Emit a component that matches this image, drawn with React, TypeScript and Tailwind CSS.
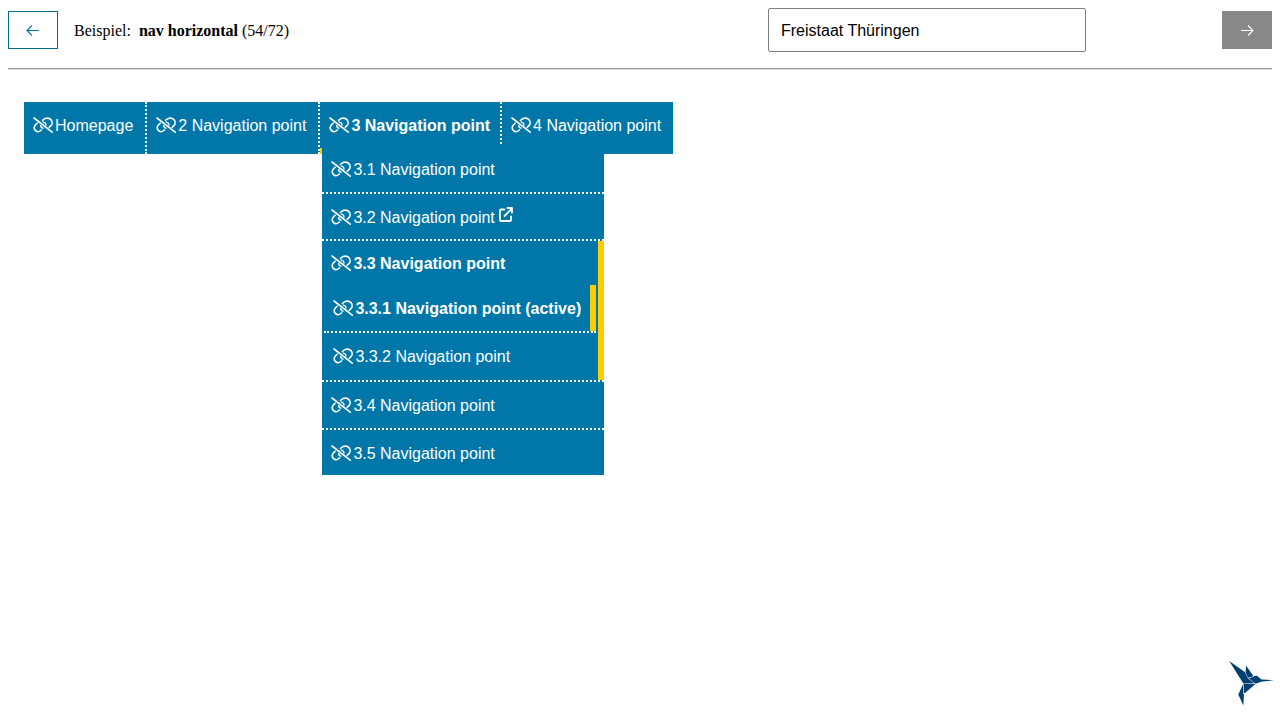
function BrokenLinkIcon() {
  return (
    <svg
      viewBox="0 0 20 16"
      className="h-4 w-5 shrink-0"
      fill="none"
      stroke="currentColor"
      strokeWidth="1.6"
      aria-hidden="true"
    >
      <path strokeLinecap="round" d="M1 1L19.200 15.200" />
      <path d="M9 3.800L10.500 2.500C12.800 .6 16.200 .8 17.900 2.600C19.600 4.400 19.500 7 17.900 8.600L15.700 10.800" />
      <path d="M4.600 5.800L2.400 8C.8 9.600.8 11.900 2.300 13.400C3.800 14.900 6.200 14.900 7.800 13.500L8.900 12.500" />
      <path strokeWidth="1.3" d="M9.800 4.900C12 5.400 13.200 7 12.900 8.700M7.600 8C7.500 9.500 8.600 11 10.500 11.400" />
    </svg>
  );
}

function ExternalIcon() {
  return (
    <svg
      viewBox="0 0 14 15"
      className="mb-1 ml-1 h-[15px] w-3.5 shrink-0"
      fill="none"
      stroke="currentColor"
      strokeWidth="1.8"
      strokeLinecap="round"
      strokeLinejoin="round"
      role="img"
      aria-label="external"
    >
      <path d="M5.500 2.500H2A1 1 0 0 0 1 3.500V13A1 1 0 0 0 2 14H11A1 1 0 0 0 12 13V9.500" />
      <path d="M5.500 9L13 1.500M8.500 1H13V5.500" />
    </svg>
  );
}

function Label({ text, external = false }: { text: string; external?: boolean }) {
  return (
    <>
      <BrokenLinkIcon />
      <span className="ml-0.5 pt-0.5 whitespace-nowrap">{text}</span>
      {external && <ExternalIcon />}
    </>
  );
}

const rowClass = "border-b-2 border-dotted border-white";
const topLinkClass = "flex h-[46px] items-center pr-3 pl-[9px]";
const subLinkClass = "flex h-[46px] items-center pl-[9px]";
const compactLinkClass = "flex h-[45px] items-center pl-[9px]";

function Arrow({ right = false }: { right?: boolean }) {
  return (
    <svg viewBox="0 0 14 12" className="h-3 w-3.5" fill="none" stroke="currentColor" strokeWidth="1.1">
      <path d={right ? "M1 6.500H13M8 1.500L13 6.500L8 11.500" : "M13 6.500H1M6 1.500L1 6.500L6 11.500"} />
    </svg>
  );
}

function Hummingbird() {
  return (
    <svg viewBox="0 0 48 48" className="size-12" fill="#003f72">
      <path d="M1.200 1L16.800 12L20 18.500L26.500 23.300L15.200 23.200Z" />
      <path d="M18 5.500L25.500 16.300L20 17.800L17.600 12.500Z" />
      <path d="M20.600 18.200L25 17C27 15.200 29.500 15.400 31 17.500L33.500 19.400L45.800 20.200L33 21.800L27.600 23.800Z" />
      <path d="M15.600 23.600L27.400 24.100L17 32.900L15.600 33.200Z" />
      <path d="M15 24.300V33.800L16 34L15.400 45.500L10.300 34.500Z" />
    </svg>
  );
}

export default function App() {
  return (
    <div className="flex min-h-screen flex-col bg-white px-2 pt-2 text-black">
      <header className="flex h-11 items-center font-['Liberation_Serif',serif] text-base">
        <button
          aria-label="Previous"
          className="flex h-[38px] w-[50px] items-center justify-center border border-[#006b93] text-[#0077a8]"
        >
          <Arrow />
        </button>
        <p className="ml-4 flex-1 pt-0.5">
          Beispiel:&nbsp; <strong>nav horizontal</strong> (54/72)
        </p>
        <select
          aria-label="Theme"
          defaultValue="th"
          className="mr-[136px] h-11 w-[318px] appearance-none rounded-xs border border-[#808080] bg-white px-3 pt-0.5 font-['Liberation_Sans',sans-serif] text-base"
        >
          <option value="th">Freistaat Thüringen</option>
        </select>
        <button aria-label="Next" className="flex h-[38px] w-[50px] items-center justify-center bg-[#888888] text-white">
          <Arrow right />
        </button>
      </header>
      <hr className="mt-4 border-t border-b border-t-[#999] border-b-[#ddd]" />
      <main className="flex-1 px-4 pt-8 font-['Liberation_Sans',sans-serif] text-base text-white">
        <nav aria-label="Main">
          <ul className="flex h-[52px] w-fit bg-[#0077a8]">
            <li className="border-r-2 border-dotted border-white">
              <a href="#home" className={topLinkClass}><Label text="Homepage" /></a>
            </li>
            <li className="border-r-2 border-dotted border-white">
              <a href="#2" className={topLinkClass}><Label text="2 Navigation point" /></a>
            </li>
            <li className="relative border-b-[6px] border-[#ffcc00]">
              <a
                href="#3"
                className="flex h-[46px] items-center border-r-2 border-dotted border-white pr-2.5 pl-[9px] font-bold"
              >
                <Label text="3 Navigation point" />
              </a>
              <ul className="absolute top-11 left-0.5 w-[282px] bg-[#0077a8]">
                <li className={rowClass}>
                  <a href="#31" className={subLinkClass}><Label text="3.1 Navigation point" /></a>
                </li>
                <li className={rowClass}>
                  <a href="#32" className={compactLinkClass}><Label text="3.2 Navigation point" external /></a>
                </li>
                <li className={rowClass}>
                  <div className="border-r-[6px] border-[#ffcc00] pb-0.5">
                    <a href="#33" className="flex h-11 items-center pl-[9px] font-bold"><Label text="3.3 Navigation point" /></a>
                    <ul className="mx-0.5">
                      <li className={rowClass}>
                        <a
                          href="#331"
                          aria-current="page"
                          className="flex h-[46px] items-center border-r-[6px] border-[#ffcc00] pl-[9px] font-bold"
                        >
                          <Label text="3.3.1 Navigation point (active)" />
                        </a>
                      </li>
                      <li>
                        <a href="#332" className={compactLinkClass}><Label text="3.3.2 Navigation point" /></a>
                      </li>
                    </ul>
                  </div>
                </li>
                <li className={rowClass}>
                  <a href="#34" className={subLinkClass}><Label text="3.4 Navigation point" /></a>
                </li>
                <li>
                  <a href="#35" className={compactLinkClass}><Label text="3.5 Navigation point" /></a>
                </li>
              </ul>
            </li>
            <li>
              <a href="#4" className={topLinkClass}><Label text="4 Navigation point" /></a>
            </li>
          </ul>
        </nav>
      </main>
      <footer className="flex justify-end pb-3">
        <a href="#top" aria-label="Hummingbird" className="-mr-1"><Hummingbird /></a>
      </footer>
    </div>
  );
}
